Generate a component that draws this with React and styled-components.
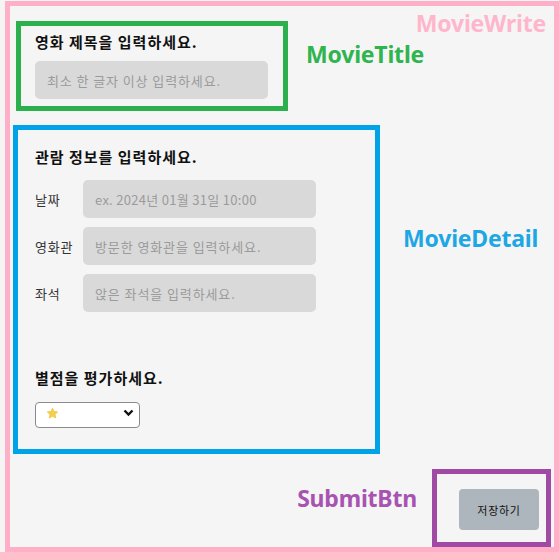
import React from 'react'
import styled, { createGlobalStyle } from 'styled-components';

const GlobalStyle = createGlobalStyle`
    html, body {
        margin: 0;
        padding: 0;
        background: #f5f5f5;
    }
    body {
        font-family: "Noto Sans CJK KR", "Noto Sans", sans-serif;
    }
`;

const Frame = styled.div`
    position: relative;
    box-sizing: border-box;
    width: 554px;
    height: 551px;
    margin: 1px 0 0 5px;
    border: 5px solid #ffafc8;
    background: #f5f5f5;
    display: flex;
    flex-direction: column;
`;

const Tag = styled.span`
    font-family: "Noto Sans", "Open Sans", sans-serif;
    font-size: 23px;
    font-weight: 700;
    line-height: 28px;
    letter-spacing: -0.2px;
    color: ${p => p.color};
    margin-top: ${p => p.top || 0}px;
`;

const FrameTag = styled(Tag)`
    position: absolute;
    top: 3px;
    right: 8px;
`;

const Row = styled.div`
    display: flex;
    align-items: flex-start;
    justify-content: ${p => p.end ? 'flex-end' : 'flex-start'};
    gap: ${p => p.gap}px;
    margin: ${p => p.margin};
`;

const Section = styled.section`
    box-sizing: border-box;
    width: ${p => p.w}px;
    height: ${p => p.h}px;
    border: 5px solid ${p => p.color};
    padding: ${p => p.pad};
    display: flex;
    flex-direction: column;
`;

const Heading = styled.h3`
    margin: 0;
    font-size: 15px;
    font-weight: 700;
    line-height: 20px;
    letter-spacing: 1px;
    color: #111;
`;

const Input = styled.input`
    box-sizing: border-box;
    width: 233px;
    height: 38px;
    border: none;
    border-radius: 5px;
    background: #d9d9d9;
    padding: 0 12px;
    font-family: "Noto Sans CJK KR", sans-serif;
    font-size: 13px;
    letter-spacing: ${p => p.spacing || 0.9}px;
    color: #333;
    outline: none;
    &::placeholder {
        color: #9b9b9b;
    }
`;

const Field = styled.div`
    display: flex;
    align-items: center;
`;

const Label = styled.label`
    width: 48px;
    font-size: 13px;
    letter-spacing: 0.8px;
    color: #333;
`;

const Fields = styled.div`
    display: flex;
    flex-direction: column;
    gap: 9px;
    margin-top: 13px;
`;

const SelectBox = styled.div`
    position: relative;
    width: 105px;
    height: 26px;
    margin-top: 12px;
`;

const Select = styled.select`
    appearance: none;
    box-sizing: border-box;
    width: 100%;
    height: 100%;
    border: 1px solid #8a8a8a;
    border-radius: 4px;
    background: #fff;
    color: transparent;
    font-size: 13px;
`;

const SelectIcon = styled.svg`
    position: absolute;
    pointer-events: none;
    top: ${p => p.top}px;
    left: ${p => p.left}px;
`;

const SaveButton = styled.button`
    width: 80px;
    height: 41px;
    border: none;
    border-radius: 4px;
    background: #adb5bd;
    font-family: "Noto Sans CJK KR", sans-serif;
    font-size: 11px;
    letter-spacing: 0.7px;
    color: #111;
`;

const MovieWrite = () => {
  return (
    <>
      <GlobalStyle />
      <Frame>
        <FrameTag color="#ffb6cc">MovieWrite</FrameTag>

        <Row gap={18} margin="15px 0 0 6px">
          <Section w={272} h={90} color="#2bb04d" pad="6px 14px 0">
            <Heading>영화 제목을 입력하세요.</Heading>
            <Input style={{ marginTop: 9 }} placeholder="최소 한 글자 이상 입력하세요." />
          </Section>
          <Tag color="#2fb44f" top={19}>MovieTitle</Tag>
        </Row>

        <Row gap={23} margin="14px 0 0 3px">
          <Section w={367} h={329} color="#00a2e8" pad="17px 17px 0">
            <Heading>관람 정보를 입력하세요.</Heading>
            <Fields>
              <Field>
                <Label>날짜</Label>
                <Input spacing={0.3} placeholder="ex. 2024년 01월 31일 10:00" />
              </Field>
              <Field>
                <Label>영화관</Label>
                <Input placeholder="방문한 영화관을 입력하세요." />
              </Field>
              <Field>
                <Label>좌석</Label>
                <Input placeholder="앉은 좌석을 입력하세요." />
              </Field>
            </Fields>
            <Heading style={{ marginTop: 56 }}>별점을 평가하세요.</Heading>
            <SelectBox>
              <Select defaultValue="1">
                <option value="1">⭐</option>
                <option value="2">⭐⭐</option>
                <option value="3">⭐⭐⭐</option>
                <option value="4">⭐⭐⭐⭐</option>
                <option value="5">⭐⭐⭐⭐⭐</option>
              </Select>
              <SelectIcon top={7} left={11} width="13" height="13" viewBox="0 0 24 24">
                <path
                  d="M12 2.2l2.9 6.1 6.6.8-4.9 4.6 1.3 6.6L12 17l-5.9 3.3 1.3-6.6-4.9-4.6 6.6-.8z"
                  fill="#f5cf4a"
                  stroke="#f0c33c"
                  strokeWidth="1.5"
                  strokeLinejoin="round"
                />
              </SelectIcon>
              <SelectIcon top={9} left={88} width="11" height="8" viewBox="0 0 11 8">
                <path d="M1.5 1.5l4 4 4-4" fill="none" stroke="#111" strokeWidth="2.4" />
              </SelectIcon>
            </SelectBox>
          </Section>
          <Tag color="#1ea7e4" top={99}>MovieDetail</Tag>
        </Row>

        <Row end gap={15} margin="15px 3px 0 0">
          <Tag color="#a853b1" top={15}>SubmitBtn</Tag>
          <Section w={119} h={78} color="#a04aa6" pad="15px 0 0 22px">
            <SaveButton>저장하기</SaveButton>
          </Section>
        </Row>
      </Frame>
    </>
  )
}

export default MovieWrite
